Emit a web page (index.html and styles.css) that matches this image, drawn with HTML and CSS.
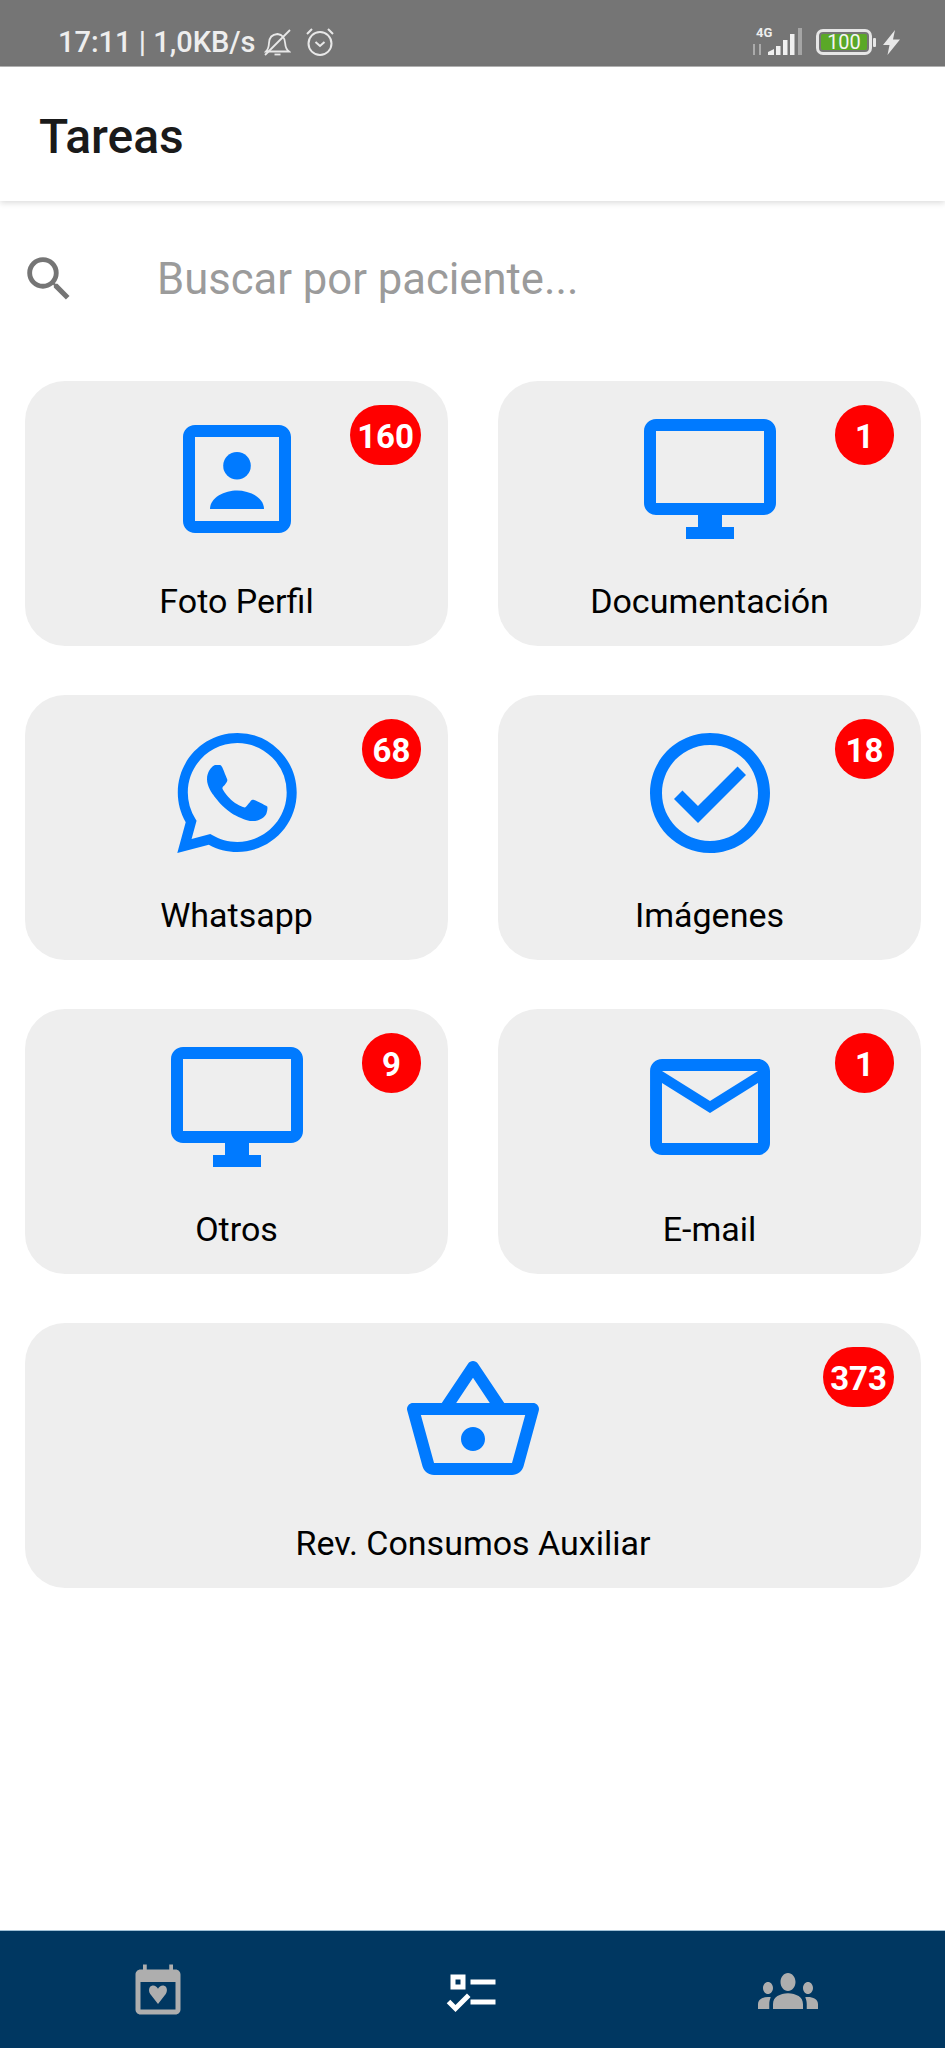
FILE: index.html
```html
<!DOCTYPE html>
<html lang="es">
<head>
<meta charset="utf-8">
<title>Tareas</title>
<link rel="stylesheet" href="styles.css">
</head>
<body>
<div class="app">
  <div class="status">
    <div class="status-left">
      <span class="status-text">17:11 | 1,0KB/s</span>
      <svg class="bell" viewBox="0 0 27 27" fill="none" stroke="#e8e8e8" stroke-width="1.8"><path d="M2 22.5h23c-2.6-2-3.6-4.5-3.8-8-.3-4.500-1.300-8.500-7.700-9.500-6 .5-8.300 4-8.500 9-.2 3.500-1 6.500-3 8.500z"/><path d="M10.500 25.500h6"/><path d="M1 26 26 1"/></svg>
      <svg class="alarm" viewBox="0 0 30 30" fill="none" stroke="#e8e8e8" stroke-width="2"><circle cx="15" cy="16.500" r="11.500"/><path d="M10.500 15l4.500 4 4.500-4"/><path d="M2 7l5-5M28 7l-5-5"/></svg>
    </div>
    <div class="status-right">
      <div class="signal">
        <span class="net">4G</span>
        <svg class="bars" viewBox="0 0 50 28"><path d="M2 16v11M8 27V16" stroke="#bdbdbd" stroke-width="1.500"/><path d="M16 27v-3l6-3v6zM24 27v-9h4.500v9zM31 27V12h4.500v15zM38 27V6h4.500v21z" fill="#f0f0f0"/><path d="M46 27V0h4v27z" fill="#a5a5a5"/></svg>
      </div>
      <div class="battery"><span class="battery-fill">100</span></div>
      <span class="battery-nub"></span>
      <svg class="bolt" viewBox="0 0 17 25" fill="#e8e8e8"><path d="M12 0 0 15h6.500L4.500 25 17 9.500h-7z"/></svg>
    </div>
  </div>

  <header class="topbar"><h1 class="title">Tareas</h1></header>

  <div class="search">
    <svg class="search-icon" viewBox="0 0 24 24" fill="#757575"><path d="M15.500 14h-.79l-.28-.27A6.471 6.471 0 0 0 16 9.500 6.500 6.500 0 1 0 9.500 16c1.610 0 3.090-.59 4.230-1.570l.27.28v.79l5 4.990L20.490 19l-4.990-5zm-6 0C7.010 14 5 11.990 5 9.500S7.010 5 9.500 5 14 7.010 14 9.500 11.990 14 9.500 14z"/></svg>
    <span class="placeholder">Buscar por paciente...</span>
  </div>

  <main class="grid">
    <div class="card">
      <span class="badge">160</span>
      <svg class="icon" viewBox="0 0 24 24"><path d="M19 5v14H5V5h14m0-2H5c-1.110 0-2 .9-2 2v14c0 1.100.89 2 2 2h14c1.100 0 2-.9 2-2V5c0-1.100-.9-2-2-2z"/><circle cx="12" cy="9.800" r="2.300"/><path d="M7.500 17c0-2 2.500-3.100 4.500-3.100s4.500 1.100 4.500 3.100z"/></svg>
      <span class="label">Foto Perfil</span>
    </div>
    <div class="card">
      <span class="badge">1</span>
      <svg class="icon" viewBox="0 0 24 24"><path d="M21 2H3c-1.100 0-2 .9-2 2v12c0 1.100.9 2 2 2h7v2H8v2h8v-2h-2v-2h7c1.100 0 2-.9 2-2V4c0-1.100-.9-2-2-2zm0 14H3V4h18v12z"/></svg>
      <span class="label">Documentación</span>
    </div>
    <div class="card">
      <span class="badge">68</span>
      <svg class="icon" viewBox="0 0 24 24"><path d="M12.040 2c-5.460 0-9.910 4.450-9.910 9.910 0 1.750.46 3.450 1.320 4.950L2.050 22l5.250-1.380c1.450.79 3.080 1.210 4.740 1.210 5.460 0 9.910-4.450 9.910-9.910 0-2.650-1.030-5.140-2.900-7.010A9.816 9.816 0 0 0 12.040 2m.01 1.670c2.200 0 4.260.86 5.820 2.420a8.225 8.225 0 0 1 2.410 5.830c0 4.540-3.700 8.230-8.240 8.230-1.480 0-2.930-.39-4.190-1.150l-.3-.17-3.120.82.83-3.040-.2-.32a8.188 8.188 0 0 1-1.260-4.380c.01-4.540 3.700-8.240 8.250-8.240M8.530 7.330c-.16 0-.43.06-.66.31-.22.25-.87.86-.87 2.070 0 1.220.89 2.390 1 2.560.14.17 1.760 2.670 4.250 3.730.59.27 1.050.42 1.410.53.59.19 1.130.16 1.560.1.48-.07 1.460-.6 1.670-1.180.21-.58.21-1.070.15-1.180-.07-.1-.23-.16-.48-.27-.25-.14-1.470-.74-1.690-.82-.23-.08-.37-.12-.56.12-.16.25-.64.81-.78.97-.15.17-.29.19-.53.07-.26-.13-1.060-.39-2-1.230-.74-.66-1.230-1.470-1.380-1.720-.12-.24-.01-.39.11-.5.11-.11.27-.29.37-.44.13-.14.17-.25.25-.41.08-.17.04-.31-.02-.43-.06-.11-.56-1.350-.77-1.840-.2-.48-.4-.42-.56-.43-.14 0-.3-.01-.47-.01z"/></svg>
      <span class="label">Whatsapp</span>
    </div>
    <div class="card">
      <span class="badge">18</span>
      <svg class="icon" viewBox="0 0 24 24"><path d="M12 2C6.480 2 2 6.480 2 12s4.480 10 10 10 10-4.480 10-10S17.520 2 12 2zm0 18c-4.410 0-8-3.590-8-8s3.590-8 8-8 8 3.590 8 8-3.590 8-8 8zm4.590-12.420L10 14.170l-2.590-2.580L6 13l4 4 8-8z"/></svg>
      <span class="label">Imágenes</span>
    </div>
    <div class="card">
      <span class="badge">9</span>
      <svg class="icon" viewBox="0 0 24 24"><path d="M21 2H3c-1.100 0-2 .9-2 2v12c0 1.100.9 2 2 2h7v2H8v2h8v-2h-2v-2h7c1.100 0 2-.9 2-2V4c0-1.100-.9-2-2-2zm0 14H3V4h18v12z"/></svg>
      <span class="label">Otros</span>
    </div>
    <div class="card">
      <span class="badge">1</span>
      <svg class="icon" viewBox="0 0 24 24"><path d="M20 4H4c-1.100 0-1.990.9-1.990 2L2 18c0 1.100.9 2 2 2h16c1.100 0 2-.9 2-2V6c0-1.100-.9-2-2-2zm0 14H4V8l8 5 8-5v10zm-8-7L4 6h16l-8 5z"/></svg>
      <span class="label">E-mail</span>
    </div>
    <div class="card wide">
      <span class="badge">373</span>
      <svg class="icon" viewBox="0 0 24 24"><path d="M22 9h-4.790l-4.380-6.560c-.19-.28-.51-.42-.83-.42s-.64.14-.83.43L6.790 9H2c-.55 0-1 .45-1 1 0 .09.01.18.04.27l2.540 9.270c.23.84 1 1.460 1.920 1.460h13c.92 0 1.690-.62 1.930-1.460l2.540-9.270L23 10c0-.55-.45-1-1-1zM12 4.800L14.800 9H9.200L12 4.800zM18.500 19l-12.990.01L3.310 11H20.700l-2.200 8zM12 13c-1.100 0-2 .9-2 2s.9 2 2 2 2-.9 2-2-.9-2-2-2z"/></svg>
      <span class="label">Rev. Consumos Auxiliar</span>
    </div>
  </main>

  <nav class="nav">
    <div class="nav-item">
      <svg class="nav-icon muted" viewBox="0 0 24 24"><path d="M19 3h-1V1h-1.500v2h-9V1H6v2H5C3.900 3 3 3.900 3 5v14c0 1.100.9 2 2 2h14c1.100 0 2-.9 2-2V5c0-1.100-.9-2-2-2zm0 16H5V8h14v11z"/><path d="M12 16.800 8.900 12.800c-.9-1.300-.5-3.200.9-3.400 1-.1 1.800.5 2.200 1.300.4-.8 1.200-1.400 2.200-1.300 1.400.2 1.800 2.100.9 3.400z"/></svg>
    </div>
    <div class="nav-item">
      <svg class="nav-icon active" viewBox="0 0 24 24"><path d="M3 5h6v6H3V5m2 2v2h2V7H5m6 0h10v2H11V7m0 8h10v2H11v-2m-6 5-3.500-3.500 1.410-1.410L5 17.170l4.590-4.580L11 14l-6 6z" fill-rule="evenodd"/></svg>
    </div>
    <div class="nav-item">
      <svg class="nav-icon group muted" viewBox="0 6 24 12" preserveAspectRatio="none"><path d="M12 12.750c1.630 0 3.070.39 4.240.9 1.080.48 1.760 1.560 1.760 2.730V18H6v-1.610c0-1.180.68-2.260 1.760-2.730 1.170-.52 2.610-.91 4.240-.91zM4 13c1.100 0 2-.9 2-2s-.9-2-2-2-2 .9-2 2 .9 2 2 2zm1.130 1.100c-.37-.06-.74-.1-1.130-.1-.99 0-1.930.21-2.780.58C.48 14.900 0 15.620 0 16.430V18h4.500v-1.610c0-.83.23-1.610.63-2.290zM20 13c1.100 0 2-.9 2-2s-.9-2-2-2-2 .9-2 2 .9 2 2 2zm4 3.430c0-.81-.48-1.530-1.220-1.850-.85-.37-1.790-.58-2.780-.58-.39 0-.76.04-1.130.1.4.68.63 1.460.63 2.290V18H24v-1.570zM12 6c1.660 0 3 1.340 3 3s-1.340 3-3 3-3-1.340-3-3 1.340-3 3-3z"/></svg>
    </div>
  </nav>
</div>
</body>
</html>
```
FILE: styles.css
```css
* { box-sizing: border-box; }
html, body { margin: 0; padding: 0; background: #fff; }
body { font-family: Roboto, "Noto Sans", sans-serif; }
.app { display: flex; flex-direction: column; width: 945px; height: 2048px; overflow: hidden; }

.status {
  flex: 0 0 67px;
  display: flex;
  align-items: center;
  justify-content: space-between;
  background: #757575;
  border-bottom: 1px solid #b5b5b5;
  padding: 18px 45px 0 58px;
  color: #eee;
}
.status-left, .status-right { display: flex; align-items: center; }
.status-text { font-size: 29px; font-weight: 500; line-height: 32px; white-space: nowrap; }
.bell { width: 27px; height: 27px; margin-left: 8px; }
.alarm { width: 30px; height: 30px; margin-left: 14px; }
.signal { position: relative; width: 50px; height: 28px; }
.bars { display: block; width: 50px; height: 28px; }
.net { position: absolute; left: 4px; top: -3px; font-size: 13px; line-height: 15px; font-weight: 700; color: #eee; }
.battery { width: 56px; height: 26px; margin-left: 14px; border: 3px solid #e6e6e6; border-radius: 7px; padding: 2px; display: flex; }
.battery-fill { flex: 1; background: #5aa827; border-radius: 2px; color: #f4f4f4; font-size: 20px; line-height: 16px; text-align: center; }
.battery-nub { width: 3px; height: 9px; margin-left: 1px; background: #e6e6e6; border-radius: 1px; }
.bolt { width: 17px; height: 25px; margin-left: 7px; }

.topbar {
  flex: 0 0 134px;
  display: flex;
  align-items: center;
  padding: 5px 39px 0;
  background: #fff;
  box-shadow: 0 2px 6px rgba(0, 0, 0, .14);
  position: relative;
}
.title { margin: 0; font-size: 48px; font-weight: 500; color: #1a1a1a; line-height: 54px; }

.search { flex: 0 0 180px; display: flex; align-items: flex-start; padding: 49px 0 0 20px; }
.search-icon { flex: 0 0 58px; width: 58px; height: 58px; }
.placeholder { margin-left: 79px; padding-top: 1px; font-size: 43.6px; line-height: 58px; color: #9b9b9b; white-space: nowrap; }

.grid {
  flex: 1;
  display: grid;
  grid-template-columns: 423px 423px;
  grid-auto-rows: 265px;
  gap: 49px 50px;
  align-content: start;
  padding: 0 24px 0 25px;
}
.card {
  position: relative;
  display: flex;
  flex-direction: column;
  align-items: center;
  padding-top: 26px;
  background: #eee;
  border-radius: 40px;
}
.wide { grid-column: 1 / span 2; }
.icon { width: 144px; height: 144px; fill: #007aff; }
.label { margin-top: 30px; font-size: 34px; line-height: 40px; color: #000; white-space: nowrap; }
.badge {
  position: absolute;
  top: 24px;
  right: 27px;
  min-width: 59px;
  height: 60px;
  padding: 2px 7px 0;
  border-radius: 30px;
  background: #f00;
  color: #fff;
  font-size: 33px;
  font-weight: 700;
  line-height: 60px;
  text-align: center;
}

.nav { flex: 0 0 118px; display: grid; grid-template-columns: 1fr 1fr 1fr; background: #003761; border-top: 1px solid #9fc0d6; }
.nav-item { display: flex; justify-content: center; padding-top: 31px; }
.nav-icon { width: 60px; height: 60px; }
.group { height: 36px; margin-top: 11px; }
.muted { fill: #aeaeae; }
.active { fill: #fff; }
```
